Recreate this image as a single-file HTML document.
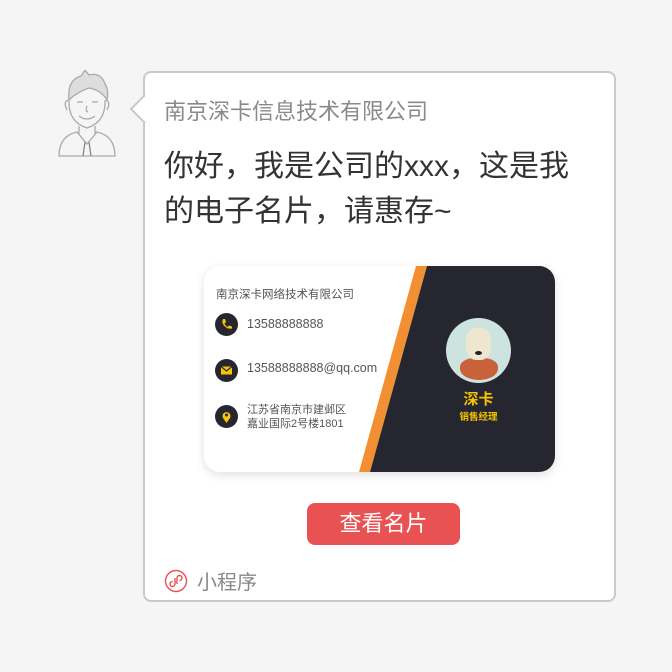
<!DOCTYPE html>
<html><head><meta charset="utf-8"><style>
*{margin:0;padding:0;box-sizing:border-box}
body{width:672px;height:672px;background:#f5f5f5;position:relative;overflow:hidden;font-family:"Liberation Sans","Noto Sans CJK SC",sans-serif}
.abs{position:absolute}
.bubble{left:143px;top:71px;width:473px;height:531px;background:#fff;border:2px solid #c9c9c9;border-radius:8px}
.title{left:164px;top:94px;font-size:22px;color:#8a8a8a;white-space:nowrap}
.msg{left:164px;top:144px;font-size:30px;line-height:45px;color:#333;width:430px}
.card{left:204px;top:266px;width:351px;height:206px;border-radius:16px;overflow:hidden;background:#fff;box-shadow:0 3px 10px rgba(0,0,0,.12)}
.ic{width:23px;height:23px;border-radius:50%;background:#262630;position:absolute}
.ct{position:absolute;font-size:12.5px;color:#555;white-space:nowrap}
.btn{left:307px;top:503px;width:153px;height:42px;background:#e85252;border-radius:8px;color:#fff;font-size:22px;text-align:center;line-height:42px}
</style></head><body>
<svg class="abs" style="left:55px;top:70px" width="64" height="88" viewBox="0 0 64 88" fill="none" stroke="#aaa" stroke-width="1.3">
<path d="M14 30 Q12 10 26 6 L30 0 L34 5 Q46 2 50 14 Q54 20 52 30 Q46 20 34 18 Q22 22 14 30Z" fill="#ddd"/>
<path d="M14 30 Q13 52 32 58 Q51 52 50 30"/>
<path d="M13 30 Q8 32 12 40 M51 30 Q56 32 52 40"/>
<path d="M22 32 h6 M37 32 h6 M24 46 Q32 52 40 46 M32 36 q-2 5 1 6"/>
<path d="M24 56 v8 M40 56 v8 M4 86 Q4 66 22 62 L32 74 L42 62 Q60 66 60 86 Z"/>
<path d="M30 72 L28 86 M34 72 L36 86" stroke="#888"/>
</svg>
<div class="abs bubble"></div>
<svg class="abs" style="left:129px;top:95px" width="18" height="28"><path d="M16 0 L2 14 L16 28" fill="#fff" stroke="#c9c9c9" stroke-width="2"/></svg>
<div class="abs title">南京深卡信息技术有限公司</div>
<div class="abs msg">你好，我是公司的xxx，这是我的电子名片，请惠存~</div>
<div class="abs card">
<svg class="abs" style="left:0;top:0" width="351" height="206"><polygon points="212,0 223,0 166,206 155,206" fill="#f28f33"/><polygon points="223,0 351,0 351,206 166,206" fill="#262630"/></svg>
<div class="ct" style="left:12px;top:20px;font-size:11.5px">南京深卡网络技术有限公司</div>
<div class="ic" style="left:11px;top:47px"><svg width="23" height="23"><path d="M8 6 l2 0 1 3 -1.5 1.5 q1 2.5 3 3.5 l1.5 -1.5 3 1 0 2 q-5 1 -8.5 -3.5 q-2 -3 -0.5 -6z" fill="#f6c600"/></svg></div>
<div class="ct" style="left:43px;top:51px">13588888888</div>
<div class="ic" style="left:11px;top:93px"><svg width="23" height="23"><rect x="6" y="7.5" width="11" height="8" fill="#f6c600"/><path d="M6 7.5 l5.5 4.5 5.5 -4.5" stroke="#262630" stroke-width="1.2" fill="none"/></svg></div>
<div class="ct" style="left:43px;top:95px">13588888888@qq.com</div>
<div class="ic" style="left:11px;top:139px"><svg width="23" height="23"><path d="M11.5 18 l-3.5 -5 a4 4 0 1 1 7 0z" fill="#f6c600"/><circle cx="11.5" cy="10" r="1.5" fill="#262630"/></svg></div>
<div class="ct" style="left:43px;top:137px;font-size:11px;line-height:14px">江苏省南京市建邺区<br>嘉业国际2号楼1801</div>
<div class="abs" style="left:242px;top:52px;width:65px;height:65px;border-radius:50%;background:radial-gradient(circle at 50% 40%,#f3eee0 0 22%,#cde3df 23%);overflow:hidden">
<div class="abs" style="left:14px;top:40px;width:38px;height:22px;background:#c9623a;border-radius:40% 40% 50% 50%"></div>
<div class="abs" style="left:20px;top:10px;width:25px;height:32px;background:#efe6d0;border-radius:40%"></div>
<div class="abs" style="left:29px;top:33px;width:7px;height:4px;background:#222;border-radius:50%"></div>
</div>
<div class="abs" style="left:242px;top:122px;width:65px;text-align:center;color:#f6c600;font-size:15px;font-weight:bold">深卡</div>
<div class="abs" style="left:242px;top:143px;width:65px;text-align:center;color:#f6c600;font-size:9.5px;font-weight:bold">销售经理</div>
</div>
<div class="abs btn">查看名片</div>
<svg class="abs" style="left:164px;top:569px" width="24" height="24" fill="none" stroke="#e85252" stroke-width="1.4"><circle cx="12" cy="12" r="10.5"/><path d="M11 9 v6 a2.5 2.5 0 1 1 -2.5 -2.5 M13 15 v-6 a2.5 2.5 0 1 1 2.5 2.5"/></svg>
<div class="abs" style="left:197px;top:566px;font-size:20px;color:#888">小程序</div>
</body></html>
